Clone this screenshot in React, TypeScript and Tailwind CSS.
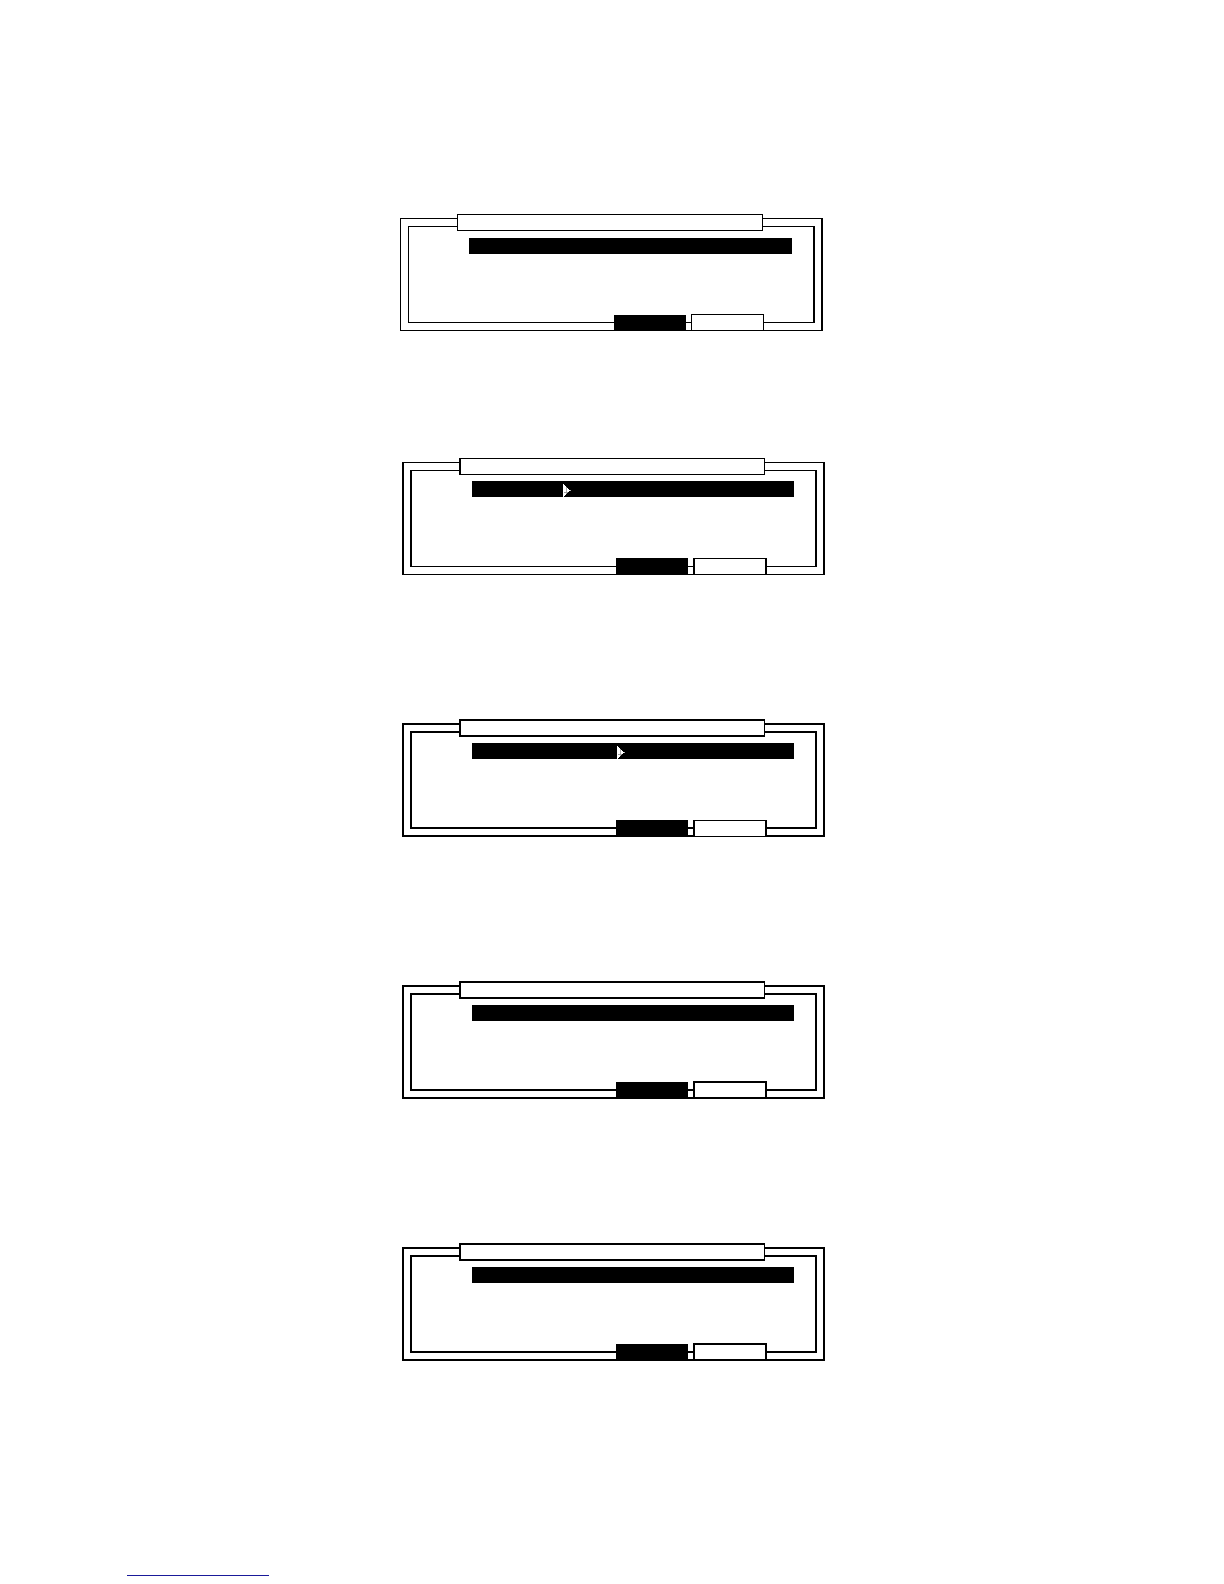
interface DialogProps {
  id: string;
  size: string;
  frame: string;
  title: string;
  field: string;
  cancel: string;
  accept?: string;
  marker?: string;
}

const firstDialog: DialogProps = {
  id: "dialog-1",
  size: "h-[113px]",
  frame: "border border-r-2",
  title: "h-[17px] border",
  field: "mt-[7px] ml-[69px] w-[323px]",
  accept: "h-4",
  cancel: "h-[17px] w-[73px] border",
};

const dialogs: DialogProps[] = [
  {
    id: "dialog-2",
    size: "h-[113px]",
    frame: "border-x-2 border-y",
    title: "h-[17px] border border-l-2",
    field: "mt-1.5 ml-[70px] w-[322px]",
    cancel: "h-[17px] w-[74px] border-x-2 border-y",
    marker: "left-[91px]",
  },
  {
    id: "dialog-3",
    size: "h-[114px]",
    frame: "border-2",
    title: "h-[18px] border-2 border-r",
    field: "mt-1.5 ml-[70px] w-[322px]",
    cancel: "h-[17px] w-[74px] border-x-2 border-y",
    marker: "left-[145px]",
  },
  {
    id: "dialog-4",
    size: "h-[114px]",
    frame: "border-2",
    title: "h-[18px] border-2 border-r",
    field: "mt-1.5 ml-[70px] w-[322px]",
    cancel: "h-[18px] w-[74px] border-2",
  },
  {
    id: "dialog-5",
    size: "h-[114px]",
    frame: "border-2",
    title: "h-[18px] border-2 border-r",
    field: "mt-1.5 ml-[70px] w-[322px]",
    cancel: "h-[18px] w-[74px] border-2",
  },
];

function Marker({ className }: { className: string }) {
  return (
    <svg
      className={`absolute top-[3px] h-[13px] w-2 ${className}`}
      viewBox="0 0 8 13"
      shapeRendering="crispEdges"
      aria-hidden="true"
    >
      <path d="M0 0h1v13H0zM1 1h1v11H1zM2 2h1v9H2zM4 4h1v5H4zM5 5h1v3H5zM6 6h1v1H6z" fill="#ffffff" />
      <path d="M3 3h1v7H3zM7 6h1v1H7z" fill="#b0b0b0" />
      <path d="M1 8h4v1H1z" fill="#a0a0a0" />
    </svg>
  );
}

function Dialog({
  id,
  size,
  frame,
  title,
  field,
  cancel,
  accept = "h-[17px]",
  marker,
}: DialogProps) {
  return (
    <form
      className={`grid w-[423px] grid-cols-1 grid-rows-1 ${size}`}
      onSubmit={(event) => event.preventDefault()}
    >
      {/* double frame, with the title, field and buttons stacked over it */}
      <div className={`col-start-1 row-start-1 border-black ${frame}`} />
      <div className={`col-start-1 row-start-1 m-2 border-black ${frame}`} />
      <div className="col-start-1 row-start-1 flex flex-col">
        <label
          htmlFor={id}
          aria-label="Entry"
          className={`-mt-1 ml-[57px] block w-[306px] border-black bg-white ${title}`}
        />
        <div className={`relative flex h-4 ${field}`}>
          <input
            id={id}
            type="text"
            aria-label="Entry"
            className="h-full w-full bg-black px-1 text-xs text-white outline-none"
          />
          {marker && <Marker className={marker} />}
        </div>
        <div className="mt-auto ml-[214px] flex items-end gap-[5px]">
          <button type="submit" aria-label="OK" className={`w-[72px] bg-black ${accept}`} />
          <button
            type="button"
            aria-label="Cancel"
            className={`border-black bg-white ${cancel}`}
          />
        </div>
      </div>
    </form>
  );
}

export default function App() {
  return (
    <div className="min-h-screen bg-white font-['Liberation_Sans',sans-serif]">
      <main className="mx-auto w-[424px] max-w-full pt-[218px]">
        <Dialog {...firstDialog} />
        <div className="mt-[131px] flex flex-col gap-[148px] pl-0.5">
          {dialogs.map((dialog) => (
            <Dialog key={dialog.id} {...dialog} />
          ))}
        </div>
      </main>
      <footer className="flex px-[127px] pt-[198px] pb-2">
        <a
          href="#top"
          aria-label="Back to top"
          className="block h-[17px] w-[142px] border-b border-[#1a1a9a]"
        />
      </footer>
    </div>
  );
}
